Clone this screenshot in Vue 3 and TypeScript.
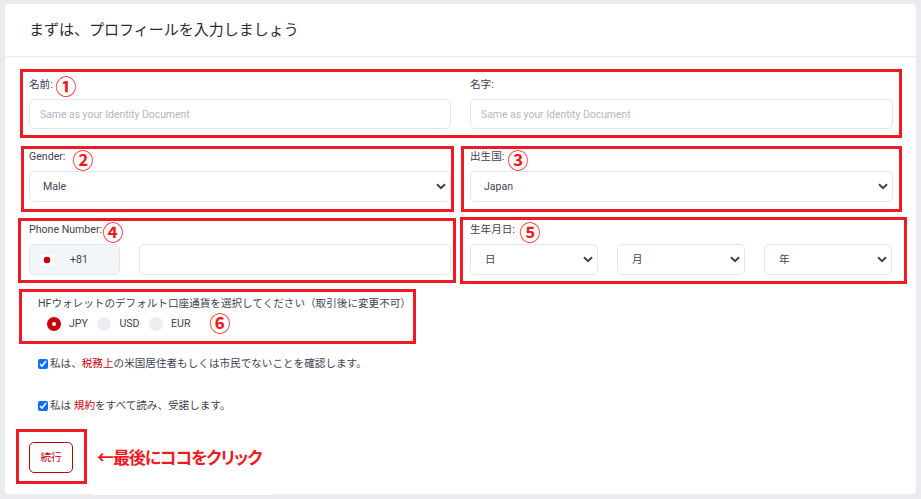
<script setup lang="ts">
interface Mark { id: number; cls: string }
const boxes: Mark[] = [
  { id: 1, cls: 'b1' }, { id: 2, cls: 'b2' }, { id: 3, cls: 'b3' }, { id: 4, cls: 'b4' },
  { id: 5, cls: 'b5' }, { id: 6, cls: 'b6' }, { id: 7, cls: 'b7' },
]
const nums: { t: string; cls: string }[] = [
  { t: '①', cls: 'n1' }, { t: '②', cls: 'n2' }, { t: '③', cls: 'n3' },
  { t: '④', cls: 'n4' }, { t: '⑤', cls: 'n5' }, { t: '⑥', cls: 'n6' },
]
const currencies = ['JPY', 'USD', 'EUR']
const dates = ['日', '月', '年']
</script>

<template>
  <div class="page">
    <div class="card">
      <header class="head">まずは、プロフィールを入力しましょう</header>
      <form class="body" @submit.prevent>
        <div class="grid">
          <div class="field">
            <label>名前:</label>
            <input class="ctl h30" placeholder="Same as your Identity Document" />
          </div>
          <div class="field">
            <label>名字:</label>
            <input class="ctl h30" placeholder="Same as your Identity Document" />
          </div>
          <div class="field">
            <label>Gender:</label>
            <select class="ctl sel"><option>Male</option></select>
          </div>
          <div class="field">
            <label>出生国:</label>
            <select class="ctl sel"><option>Japan</option></select>
          </div>
          <div class="field">
            <label>Phone Number:</label>
            <div class="phone">
              <div class="code">
                <svg class="flag" width="14" height="10" viewBox="0 0 14 10">
                  <rect width="14" height="10" fill="#fff" />
                  <circle cx="7" cy="5" r="3.3" fill="#c6000b" />
                </svg>
                <span>+81</span>
              </div>
              <input class="ctl num" />
            </div>
          </div>
          <div class="field">
            <label>生年月日:</label>
            <div class="dates">
              <select v-for="d in dates" :key="d" class="ctl sel date"><option>{{ d }}</option></select>
            </div>
          </div>
        </div>

        <div class="wallet">
          <div class="wallet-title">HFウォレットのデフォルト口座通貨を選択してください（取引後に変更不可）</div>
          <div class="radios">
            <label v-for="(c, i) in currencies" :key="c" class="radio">
              <span class="dot" :class="{ on: i === 0 }"></span>{{ c }}
            </label>
          </div>
        </div>

        <label class="check c1">
          <input type="checkbox" checked />
          <span>私は、<em>税務上</em>の米国居住者もしくは市民でないことを確認します。</span>
        </label>
        <label class="check c2">
          <input type="checkbox" checked />
          <span>私は <em>規約</em>をすべて読み、受諾します。</span>
        </label>

        <div class="actions">
          <button class="btn" type="button">続行</button>
        </div>
      </form>
    </div>

    <div class="stub"></div>
    <div v-for="b in boxes" :key="b.id" class="mark" :class="b.cls"></div>
    <span v-for="n in nums" :key="n.t" class="circled" :class="n.cls">{{ n.t }}</span>
    <span class="note">←最後にココをクリック</span>
  </div>
</template>

<style>
html, body { background: #e9ebee; }
</style>

<style scoped>
* { box-sizing: border-box; }
.page {
  position: relative;
  width: 921px;
  height: 499px;
  overflow: hidden;
  padding: 4px 5px 5px;
  background: #e9ebee;
  font-family: Roboto, "Noto Sans CJK JP", sans-serif;
  font-size: 10.6px;
  color: #3f4254;
}
.card { height: 490px; background: #fff; border-radius: 4px; }
.head {
  height: 53px;
  padding: 16px 24px 0;
  border-bottom: 1px solid #ebedf3;
  font-size: 15px;
  line-height: 20px;
  color: #2b2b33;
}
.body { padding: 21px 23px 0 24px; }
.grid { display: grid; grid-template-columns: 422px 423px; column-gap: 19px; row-gap: 21px; }
.field label { display: block; height: 14px; line-height: 14px; margin-bottom: 7px; }
.ctl {
  display: block;
  width: 100%;
  height: 31px;
  padding: 0 10px;
  border: 1px solid #e4e6ef;
  border-radius: 5px;
  background: #fff;
  font: inherit;
  color: #3f4254;
  outline: none;
}
.h30 { height: 30px; font-size: 10.4px; }
.ctl::placeholder { color: #b5b5c3; opacity: 1; }
.sel {
  appearance: none;
  padding-left: 13px;
  background-image: url("data:image/svg+xml,%3Csvg xmlns='http://www.w3.org/2000/svg' viewBox='0 0 10 7'%3E%3Cpath d='M1 1.2l4 4 4-4' fill='none' stroke='%233f4254' stroke-width='2'/%3E%3C/svg%3E");
  background-repeat: no-repeat;
  background-position: right 4px center;
  background-size: 10px 7px;
}
.phone { display: flex; gap: 19px; }
.code {
  display: flex;
  align-items: center;
  width: 91px;
  height: 31px;
  padding-left: 10px;
  border: 1px solid #e4e6ef;
  border-radius: 5px;
  background: #f3f6f9;
  flex: none;
}
.flag { margin-right: 16px; }
.code span { margin-bottom: 1px; }
.num { flex: 1; min-width: 0; }
.dates { display: flex; gap: 19px; width: 422px; }
.date { flex: 1; min-width: 0; padding-left: 14px; }
.wallet { margin: 22px 0 0 9px; }
.wallet-title { height: 14px; line-height: 14px; }
.radios { display: flex; margin: 6px 0 0 9px; }
.radio { display: flex; align-items: center; height: 14px; line-height: 14px; margin-right: 9.5px; }
.dot {
  width: 14px;
  height: 14px;
  margin-right: 8px;
  border-radius: 50%;
  background: #ebedf3;
}
.dot.on { background: #fff; border: 5px solid #c6000b; }
.check { display: flex; align-items: center; height: 14px; margin-left: 9px; line-height: 14px; }
.check input { width: 10px; height: 10px; margin: 0 2px 0 0; accent-color: #0d6efd; }
.check em { font-style: normal; color: #c6000b; }
.c1 { margin-top: 26px; }
.c2 { margin-top: 28px; }
.actions { margin-top: 29px; }
.btn {
  display: block;
  width: 44px;
  height: 31px;
  padding: 0 0 2px;
  border: 1px solid #c6000b;
  border-radius: 5px;
  background: #fff;
  color: #c6000b;
  font: inherit;
}
.stub { position: absolute; left: 92px; top: 494px; width: 180px; height: 1px; background: #fff; }
.mark { position: absolute; border: 3px solid #ed1c24; }
.b1 { left: 20px; top: 69px; width: 882px; height: 69px; }
.b2 { left: 21px; top: 146px; width: 433px; height: 66px; }
.b3 { left: 461px; top: 146px; width: 441px; height: 66px; }
.b4 { left: 18px; top: 218px; width: 438px; height: 65px; }
.b5 { left: 460px; top: 217px; width: 447px; height: 67px; }
.b6 { left: 19px; top: 289px; width: 397px; height: 55px; }
.b7 { left: 16px; top: 429px; width: 71px; height: 55px; }
.circled {
  position: absolute;
  width: 21px;
  height: 21px;
  line-height: 21px;
  text-align: center;
  font-size: 21px;
  font-weight: 700;
  color: #ed1c24;
  font-family: "Noto Sans CJK JP", sans-serif;
}
.n1 { left: 55.5px; top: 75px; }
.n2 { left: 72.5px; top: 149px; }
.n3 { left: 507.5px; top: 149px; }
.n4 { left: 102.5px; top: 221px; }
.n5 { left: 519.5px; top: 221px; }
.n6 { left: 209.5px; top: 312px; }
.note {
  position: absolute;
  left: 97px;
  top: 445px;
  line-height: 24px;
  font-size: 17px;
  font-weight: 700;
  letter-spacing: -1.1px;
  font-feature-settings: "palt";
  color: #ed1c24;
  font-family: "Noto Sans CJK JP", sans-serif;
  white-space: nowrap;
}
</style>
